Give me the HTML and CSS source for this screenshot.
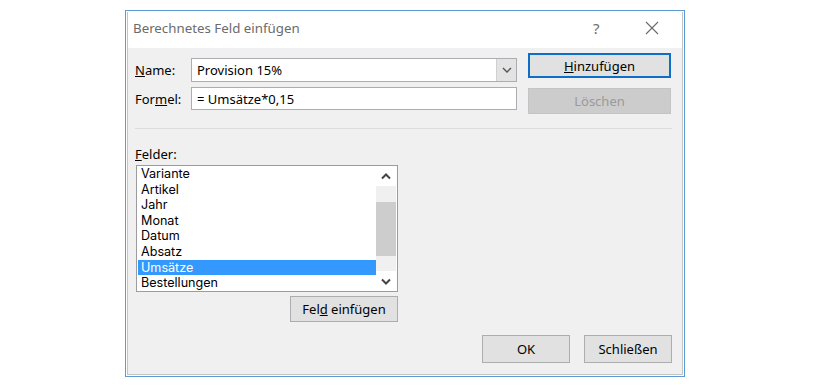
FILE: index.html
```html
<!DOCTYPE html>
<html lang="de">
<head>
<meta charset="utf-8">
<title>Berechnetes Feld einfügen</title>
<link rel="stylesheet" href="styles.css">
</head>
<body>
<div class="dialog">
  <div class="frame">
    <div class="titlebar">
      <span class="title">Berechnetes Feld einfügen</span>
      <span class="help">?</span>
      <span class="close">
        <svg width="14" height="14" viewBox="0 0 14 14"><path d="M1 1 L13 13 M13 1 L1 13" stroke="#6a6a6a" stroke-width="1.1" fill="none"/></svg>
      </span>
    </div>
    <div class="body">
      <div class="top">
        <div class="fields">
          <div class="row">
            <span class="label"><u>N</u>ame:</span>
            <div class="combo">
              <span class="value">Provision 15%</span>
              <span class="drop">
                <svg width="10" height="6" viewBox="0 0 10 6"><path d="M1 1 L5 5 L9 1" stroke="#555" stroke-width="1.4" fill="none"/></svg>
              </span>
            </div>
          </div>
          <div class="row">
            <span class="label">For<u>m</u>el:</span>
            <div class="input"><span class="value">= Umsätze*0,15</span></div>
          </div>
        </div>
        <div class="side">
          <button class="btn primary"><u>H</u>inzufügen</button>
          <button class="btn disabled">Löschen</button>
        </div>
      </div>
      <div class="sep"></div>
      <div class="felder-label"><u>F</u>elder:</div>
      <div class="listbox">
        <ul class="items">
          <li>Variante</li>
          <li>Artikel</li>
          <li>Jahr</li>
          <li>Monat</li>
          <li>Datum</li>
          <li>Absatz</li>
          <li class="selected">Umsätze</li>
          <li>Bestellungen</li>
        </ul>
        <div class="scrollbar">
          <span class="arrow">
            <svg width="10" height="7" viewBox="0 0 10 7"><path d="M1 5.5 L5 1.5 L9 5.5" stroke="#444" stroke-width="2" fill="none"/></svg>
          </span>
          <div class="track"><div class="thumb"></div></div>
          <span class="arrow">
            <svg width="10" height="7" viewBox="0 0 10 7"><path d="M1 1.5 L5 5.5 L9 1.5" stroke="#444" stroke-width="2" fill="none"/></svg>
          </span>
        </div>
      </div>
      <div class="insert-row">
        <button class="btn insert">Fel<u>d</u> einfügen</button>
      </div>
      <div class="footer">
        <button class="btn footer-btn">OK</button>
        <button class="btn footer-btn">Schließen</button>
      </div>
    </div>
  </div>
</div>
</body>
</html>
```

FILE: styles.css
```css
* { box-sizing: border-box; }
html, body { margin: 0; padding: 0; background: #ffffff; }
body {
  font-family: "Noto Sans", "Open Sans", sans-serif;
  font-size: 13px;
  color: #000;
  padding: 10px 0 0 125px;
}
.dialog {
  width: 560px;
  height: 367px;
  border: 1px solid #5b9bd5;
  padding: 1px;
  background: #fff;
}
.frame {
  height: 100%;
  border: 1px solid #c4c4c4;
  border-top: none;
  display: flex;
  flex-direction: column;
}
.titlebar {
  height: 36px;
  background: #fff;
  display: flex;
  align-items: center;
  padding-left: 5px;
  padding-bottom: 4px;
}
.title {
  font-size: 13.3px;
  color: #6b6b6b;
  flex: 1;
}
.help {
  font-size: 15px;
  color: #6b6b6b;
  width: 20px;
  margin-right: 32px;
}
.close {
  width: 14px;
  height: 14px;
  margin-right: 23px;
  display: flex;
}
.body {
  flex: 1;
  background: #f0f0f0;
  padding: 0 10px 0 7px;
  display: flex;
  flex-direction: column;
}
.top {
  display: flex;
  gap: 11px;
}
.fields {
  padding-top: 10px;
  display: flex;
  flex-direction: column;
  gap: 5px;
}
.row {
  display: flex;
  align-items: center;
}
.label {
  width: 56px;
}
.combo, .input {
  width: 326px;
  height: 24px;
  border: 1px solid #abadb3;
  background: #fff;
  display: flex;
  align-items: center;
}
.input { height: 23px; }
.value {
  flex: 1;
  padding-left: 5px;
}
.drop {
  width: 20px;
  height: 100%;
  background: #e3e3e3;
  border-left: 1px solid #d0d0d0;
  display: flex;
  align-items: center;
  justify-content: center;
}
.side {
  padding-top: 5px;
  display: flex;
  flex-direction: column;
  gap: 10px;
}
.btn {
  font-family: inherit;
  font-size: 13px;
  color: #000;
  background: #e1e1e1;
  border: 1px solid #adadad;
  padding: 0;
  margin: 0;
  height: 26px;
}
.primary {
  width: 143px;
  height: 25px;
  border: 2px solid #0f6fc6;
}
.disabled {
  width: 143px;
  background: #cccccc;
  border-color: #c4c4c4;
  color: #9a9a9a;
}
.sep {
  margin-top: 14px;
  height: 1px;
  background: #dcdcdc;
}
.felder-label {
  margin-top: 17px;
  line-height: 16px;
}
.listbox {
  margin-top: 3px;
  margin-left: 1px;
  width: 262px;
  height: 127px;
  border: 1px solid #9c9c9c;
  background: #fff;
  display: flex;
}
.items {
  list-style: none;
  margin: 0;
  padding: 0 0 0 1px;
  flex: 1;
  font-family: "Inter", "Noto Sans", sans-serif;
  font-size: 12.6px;
}
.items li {
  height: 15.6px;
  line-height: 15.6px;
  padding-left: 3px;
}
.items li.selected {
  background: #3399ff;
  color: #fff;
}
.scrollbar {
  width: 20px;
  margin: 0 1px 0 0;
  background: #f0f0f0;
  display: flex;
  flex-direction: column;
}
.arrow {
  height: 20px;
  display: flex;
  align-items: center;
  justify-content: center;
  background: #fff;
}
.track {
  flex: 1;
  background: #f0f0f0;
  padding: 16px 0 15px 0;
}
.thumb {
  height: 100%;
  background: #cdcdcd;
}
.insert-row {
  display: flex;
  justify-content: flex-start;
  padding-left: 155px;
  margin-top: 4px;
}
.insert {
  width: 108px;
  height: 26px;
}
.footer {
  margin-top: 13px;
  display: flex;
  justify-content: flex-end;
  gap: 14px;
}
.footer-btn {
  width: 88px;
  height: 28px;
}
```
